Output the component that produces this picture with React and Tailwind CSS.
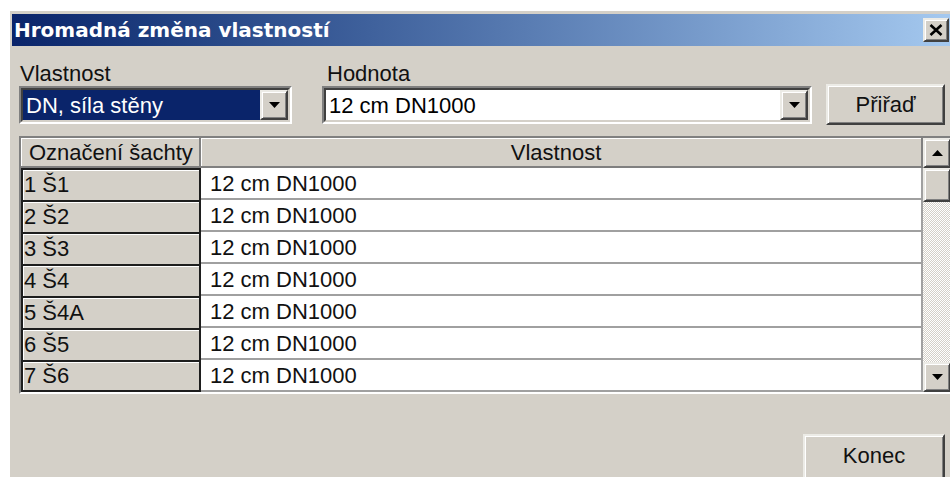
import React from 'react';

const RAISED =
  'bg-[#d4d0c8] border-2 border-t-[#ecebe6] border-l-[#ecebe6] border-r-[#404040] border-b-[#404040] shadow-[inset_1px_1px_0_#ffffff,inset_-1px_-1px_0_#808080]';

const SUNKEN =
  'border-2 border-t-[#808080] border-l-[#808080] border-r-white border-b-white';

const rows = ['1 Š1', '2 Š2', '3 Š3', '4 Š4', '5 Š4A', '6 Š5', '7 Š6'];

const Arrow = ({ up = false }) => (
  <svg width="11" height="6" viewBox="0 0 11 6" className={up ? 'rotate-180' : ''}>
    <path d="M0 0h11L5.5 6z" fill="#000" />
  </svg>
);

const Combo = ({ value, selected = false, className = '' }) => (
  <div className={`h-[38px] flex ${SUNKEN} ${className}`}>
    <div className="flex-1 flex bg-white border-2 border-t-[#404040] border-l-[#404040] border-r-[#d4d0c8] border-b-[#d4d0c8]">
      <div
        className={`flex-1 flex items-center pl-[3px] ${
          selected ? 'bg-[#0a246a] text-white' : 'text-black'
        }`}
      >
        {value}
      </div>
      <div className={`w-[28px] flex items-center justify-center ${RAISED}`}>
        <Arrow />
      </div>
    </div>
  </div>
);

const App = () => {
  return (
    <div className="w-[950px] h-[477px] overflow-hidden bg-white pt-[9px] pl-[8px] font-['Liberation_Sans',Arial,sans-serif] text-[22px] text-[#111]">
      <div className="w-[950px] h-[480px] bg-[#d4d0c8] border-l-2 border-t-2 border-white pl-[2px] pt-[3px] flex flex-col">
        {/* Title bar */}
        <div className="h-[32px] flex items-center justify-between bg-gradient-to-r from-[#0a246a] to-[#a6caf0] pl-[2px] pr-[9px]">
          <span className="font-['DejaVu_Sans',sans-serif] font-bold text-[20px] text-white">
            Hromadná změna vlastností
          </span>
          <div className={`w-[26px] h-[24px] flex items-center justify-center ${RAISED}`}>
            <svg width="14" height="12" viewBox="0 0 14 12">
              <path d="M1.5 1l11 10M12.5 1l-11 10" stroke="#000" strokeWidth="2.6" />
            </svg>
          </div>
        </div>

        {/* Body */}
        <div className="flex-1 flex flex-col pl-[7px] pt-[16px]">
          <div className="flex items-end">
            <div className="w-[273px] flex flex-col">
              <span className="leading-[24px] pl-[1px]">Vlastnost</span>
              <Combo value="DN, síla stěny" selected />
            </div>
            <div className="w-[490px] ml-[30px] flex flex-col">
              <span className="leading-[24px] pl-[5px]">Hodnota</span>
              <Combo value="12 cm DN1000" />
            </div>
            <button className={`ml-[14px] w-[119px] h-[41px] mb-[-1px] flex items-center justify-center ${RAISED}`}>
              Přiřaď
            </button>
          </div>

          {/* Grid */}
          <div className={`mt-[12px] w-[934px] h-[258px] flex ${SUNKEN}`}>
            <div className="flex-1 flex flex-col">
              <div className="h-[30px] flex">
                <div className="w-[180px] flex items-center pl-[8px] border-r-2 border-b-2 border-[#808080] shadow-[inset_1px_1px_0_#ffffff]">
                  Označení šachty
                </div>
                <div className="flex-1 flex items-center justify-center pr-[10px] border-r-2 border-b-2 border-[#808080] shadow-[inset_1px_1px_0_#ffffff]">
                  Vlastnost
                </div>
              </div>
              {rows.map((r, i) => (
                <div key={r} className="h-[32px] flex">
                  <div
                    className={`w-[180px] flex items-center pl-[1px] pb-[2px] border-t-2 border-x-2 border-[#1e1e1e] shadow-[inset_1px_1px_0_#ffffff] ${
                      i === rows.length - 1 ? 'border-b-2' : ''
                    }`}
                  >
                    {r}
                  </div>
                  <div className="flex-1 flex items-center pl-[9px] bg-white border-b-2 border-r-2 border-[#a0a0a0]">
                    12 cm DN1000
                  </div>
                </div>
              ))}
            </div>

            {/* Scrollbar */}
            <div className="w-[28px] flex flex-col">
              <div className={`h-[30px] flex items-center justify-center ${RAISED}`}>
                <Arrow up />
              </div>
              <div className="flex-1 flex flex-col bg-[repeating-conic-gradient(#ffffff_0%_25%,#d4d0c8_0%_50%)] bg-[length:2px_2px]">
                <div className={`h-[34px] ${RAISED}`} />
              </div>
              <div className={`h-[30px] flex items-center justify-center ${RAISED}`}>
                <Arrow />
              </div>
            </div>
          </div>

          <div className="mt-[40px] w-[934px] flex justify-end pr-[8px]">
            <button className={`w-[142px] h-[46px] flex items-center justify-center pb-[4px] ${RAISED}`}>
              Konec
            </button>
          </div>
        </div>
      </div>
    </div>
  );
};

export default App;
